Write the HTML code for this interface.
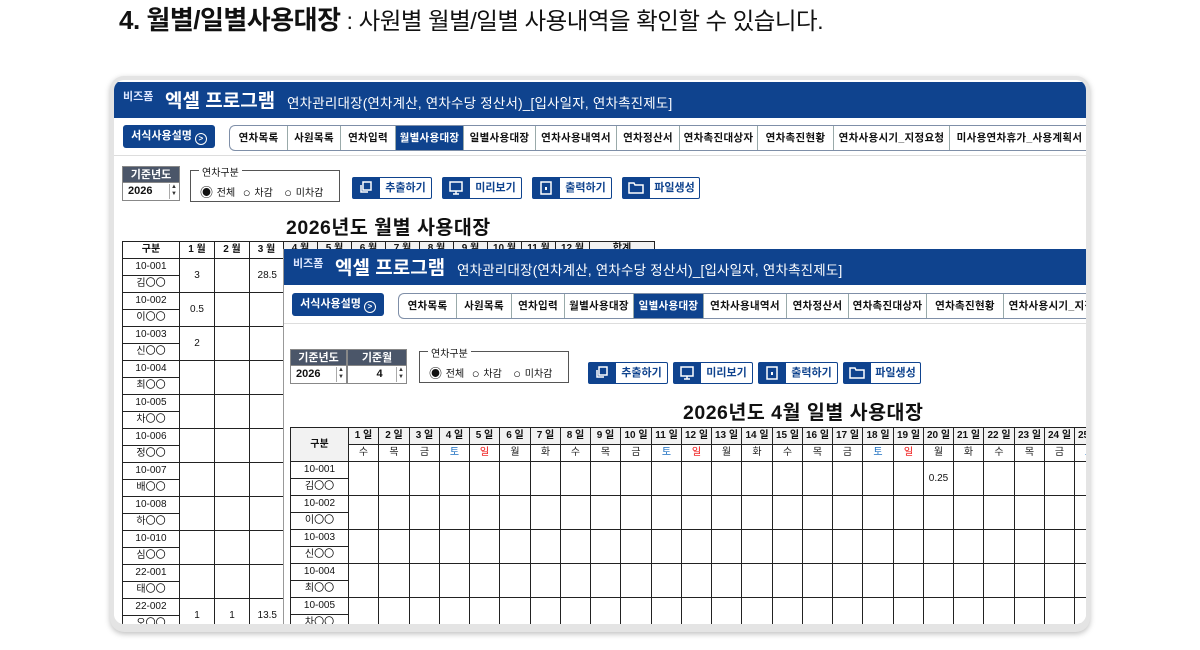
<!DOCTYPE html>
<html><head><meta charset="utf-8">
<style>
*{box-sizing:border-box;margin:0;padding:0}
body{width:1200px;height:650px;background:#fff;position:relative;overflow:hidden;font-family:"Liberation Sans","Noto Sans CJK KR",sans-serif;color:#111}
.a{position:absolute}
.card{left:110px;top:76px;width:980px;height:556px;border-radius:14px;background:#e4e4e4;box-shadow:0 2px 6px rgba(0,0,0,.25)}
.inner{left:114px;top:80px;width:972px;height:544px;border-radius:10px;background:#fff;overflow:hidden}
.win{position:absolute;background:#fff;overflow:hidden}
.hdr{position:absolute;left:0;top:0;right:0;height:36px;background:#0f438e;color:#fff}
.biz{position:absolute;left:9px;top:6px;font-size:11px;font-weight:bold;color:#dfe8ff}
.big{position:absolute;left:51px;top:4px;font-size:19px;font-weight:bold}
.sub{position:absolute;left:173px;top:10px;font-size:13.5px;letter-spacing:0.2px}
.help{position:absolute;background:#0f438e;color:#fff;font-size:11px;font-weight:bold;border-radius:3px;text-align:center;line-height:23px}
.tabs{position:absolute;height:26px;border:1px solid #7f8fa8;border-right:none;border-radius:6px 0 0 6px;display:flex;overflow:hidden;background:#fff}
.tabs div{font-size:10.5px;font-weight:bold;text-align:center;line-height:24px;border-right:1px solid #9aa;white-space:nowrap;overflow:hidden;letter-spacing:0.3px}
.tabs .on{background:#0f438e;color:#fff}
.lbl{position:absolute;background:#4b5669;color:#fff;font-size:11px;font-weight:bold;text-align:center;line-height:16px;border:1px solid #888}
.val{position:absolute;background:#fff;font-size:11px;font-weight:bold;line-height:17px;border:1px solid #888;padding-left:5px}
.spin{position:absolute;right:1px;top:1px;width:9px;height:15px;border-left:1px solid #aaa;font-size:6px;line-height:7px;text-align:center;color:#333}
.grp{position:absolute;border:1px solid #555;font-size:10px}
.grp .t{position:absolute;left:8px;top:-7px;background:#fff;padding:0 3px}
.grp .r{position:absolute;left:9px;top:11px;white-space:nowrap;word-spacing:1px}
.grp .r span{font-size:13px;vertical-align:-1px}
.btn{position:absolute;height:22px;border:1px solid #0f438e;border-radius:2px;background:#fff;display:flex;font-size:11px;font-weight:bold;color:#0f438e}
.btn .ic{width:27px;background:#0f438e;position:relative}
.btn .tx{flex:1;text-align:center;line-height:20px}
.ttl{position:absolute;font-size:19.5px;font-weight:bold;white-space:nowrap;letter-spacing:0.5px}
.c{position:absolute;border:1px solid #222;font-size:10px;text-align:center;background:#fff;white-space:nowrap}
.g{background:#f2f2f2;font-weight:bold}
</style></head><body>
<div class="a" style="left:119px;top:0px;font-size:26px;white-space:nowrap;letter-spacing:-0.5px"><b>4. 월별/일별사용대장</b><span style="font-size:23.5px"> : 사원별 월별/일별 사용내역을 확인할 수 있습니다.</span></div>
<div class="a card"></div>
<div class="a inner">
 <div class="win" id="w1" style="left:0;top:2px;width:972px;height:542px"></div>
 <div class="win" id="w2" style="left:170px;top:169px;width:802px;height:375px;box-shadow:-1px 0 0 #999"></div>
</div>
<script>
function el(p,cls,st,html){var d=document.createElement('div');if(cls)d.className=cls;d.style.cssText=st;if(html!=null)d.innerHTML=html;p.appendChild(d);return d;}
var icons=[
'<svg width="27" height="20" viewBox="0 0 27 20"><rect x="10" y="4" width="8" height="8" fill="none" stroke="#fff" stroke-width="1.5"/><path d="M8 7v7h7" fill="none" stroke="#fff" stroke-width="1.5"/></svg>',
'<svg width="27" height="20" viewBox="0 0 27 20"><rect x="7" y="4" width="12" height="9" fill="none" stroke="#fff" stroke-width="1.5"/><path d="M13 13v3M10 16h6" stroke="#fff" stroke-width="1.5"/></svg>',
'<svg width="27" height="20" viewBox="0 0 27 20"><rect x="8" y="4" width="10" height="12" fill="none" stroke="#fff" stroke-width="1.5"/><rect x="12" y="9" width="2" height="3" fill="#fff"/></svg>',
'<svg width="27" height="20" viewBox="0 0 27 20"><path d="M6 5h5l1 2h8v8H6z" fill="none" stroke="#fff" stroke-width="1.5"/></svg>'];
function win(w,o){
 var h=el(w,'hdr','');
 el(h,'biz','','비즈폼');el(h,'big','','엑셀 프로그램');el(h,'sub','','연차관리대장(연차계산, 연차수당 정산서)_[입사일자, 연차촉진제도]');
 el(w,'help','left:'+o.hx+'px;top:'+o.hy+'px;width:92px;height:23px','서식사용설명 <span style="display:inline-block;width:12px;height:12px;border:1.5px solid #fff;border-radius:50%;font-size:8px;line-height:9px;vertical-align:-2px">&gt;</span>');
 var t=el(w,'tabs','left:'+o.tx+'px;top:'+o.hy+'px;width:'+(972-o.tx+10)+'px');
 o.tabs.forEach(function(a,i){el(t,i==o.on?'on':'','width:'+a[1]+'px;flex:none',a[0]);});
 el(w,'',' position:absolute;left:0;right:0;top:'+(o.hy+30)+'px;height:1px;background:#ddd');
 o.lbls.forEach(function(l){el(w,'lbl','left:'+l[0]+'px;top:'+o.ly+'px;width:'+l[1]+'px;height:17px',l[2]);
  var v=el(w,'val','left:'+l[0]+'px;top:'+(o.ly+16)+'px;width:'+l[1]+'px;height:19px;'+(l[4]?'text-align:center':''),l[3]);el(v,'spin','','▲<br>▼');});
 var g=el(w,'grp','left:'+o.gx+'px;top:'+o.gy+'px;width:150px;height:32px');
 el(g,'t','','연차구분');el(g,'r','','<span>◉</span> 전체 &nbsp;<span>○</span> 차감 &nbsp; <span>○</span> 미차감');
 ['추출하기','미리보기','출력하기','파일생성'].forEach(function(s,i){var b=el(w,'btn','left:'+o.bx[i]+'px;top:'+o.by+'px;width:'+(i==3?78:80)+'px');el(b,'ic','',icons[i]);el(b,'tx','',s);});
 el(w,'ttl','left:'+o.ttx+'px;top:'+o.tty+'px',o.ttl);
}
var T1=[['연차목록',58],['사원목록',53],['연차입력',55],['월별사용대장',68],['일별사용대장',72],['연차사용내역서',81],['연차정산서',63],['연차촉진대상자',78],['연차촉진현황',76],['연차사용시기_지정요청',116],['미사용연차휴가_사용계획서',140]];
var T2=[['연차목록',58],['사원목록',55],['연차입력',53],['월별사용대장',69],['일별사용대장',70],['연차사용내역서',83],['연차정산서',62],['연차촉진대상자',78],['연차촉진현황',77],['연차사용시기_지정요청',116]];
var w1=document.getElementById('w1'),w2=document.getElementById('w2');
win(w1,{hx:9,hy:43,tx:115,tabs:T1,on:3,ly:84,lbls:[[8,58,'기준년도','2026']],gx:76,gy:88,bx:[238,328,418,508],by:95,ttx:172,tty:129,ttl:'2026년도 월별 사용대장'});
win(w2,{hx:8,hy:44,tx:114,tabs:T2,on:4,ly:100,lbls:[[6,57,'기준년도','2026'],[63,60,'기준월','4',1]],gx:135,gy:102,bx:[304,389,474,559],by:113,ttx:399,tty:147,ttl:'2026년도 4월 일별 사용대장'});
var L=[8,65,100,135,169],R=159;
var hd=['구분','1 월','2 월','3 월'];
for(var i=0;i<4;i++)el(w1,'c g','left:'+L[i]+'px;top:'+R+'px;width:'+(L[i+1]-L[i]+1)+'px;height:18px;line-height:16px;background:#fff',hd[i]);
var mh=['4 월','5 월','6 월','7 월','8 월','9 월','10 월','11 월','12 월','합계'];
for(var i=0;i<10;i++)el(w1,'c g','left:'+(169+i*34)+'px;top:'+R+'px;width:'+(i==9?66:35)+'px;height:18px;line-height:14px',mh[i]);
var ids=['10-001','10-002','10-003','10-004','10-005','10-006','10-007','10-008','10-010','22-001','22-002'];
var nm=['김〇〇','이〇〇','신〇〇','최〇〇','차〇〇','정〇〇','배〇〇','하〇〇','심〇〇','태〇〇','오〇〇'];
var vals={0:['3','','28.5'],1:['0.5','',''],2:['2','',''],10:['1','1','13.5']};
ids.forEach(function(id,k){var y=R+17+k*34;
 el(w1,'c','left:8px;top:'+y+'px;width:58px;height:18px;line-height:16px',id);
 el(w1,'c','left:8px;top:'+(y+17)+'px;width:58px;height:18px;line-height:16px',nm[k]);
 for(var i=1;i<4;i++)el(w1,'c','left:'+L[i]+'px;top:'+y+'px;width:'+(L[i+1]-L[i]+1)+'px;height:35px;line-height:33px;'+(i==3?'text-align:right;padding-right:6px':''),(vals[k]||['','',''])[i-1]);
});
var X1=64,DW=30.25,R2=178;
el(w2,'c g','left:6px;top:'+R2+'px;width:59px;height:35px;line-height:33px','구분');
var wd=['수','목','금','토','일','월','화'];
for(var d=0;d<25;d++){var x=Math.round(X1+d*DW),x2=Math.round(X1+(d+1)*DW),wd_=wd[d%7];
 el(w2,'c g','left:'+x+'px;top:'+R2+'px;width:'+(x2-x+1)+'px;height:18px;line-height:16px;overflow:hidden',(d+1)+' 일');
 el(w2,'c','left:'+x+'px;top:'+(R2+17)+'px;width:'+(x2-x+1)+'px;height:18px;line-height:16px;color:'+(wd_=='토'?'#1c6fc0':wd_=='일'?'#e00':'#222'),wd_);
}
ids.slice(0,6).forEach(function(id,k){var y=R2+34+k*34;
 el(w2,'c','left:6px;top:'+y+'px;width:59px;height:18px;line-height:16px',id);
 el(w2,'c','left:6px;top:'+(y+17)+'px;width:59px;height:18px;line-height:16px',nm[k]);
 for(var d=0;d<25;d++){var x=Math.round(X1+d*DW),x2=Math.round(X1+(d+1)*DW);
  el(w2,'c','left:'+x+'px;top:'+y+'px;width:'+(x2-x+1)+'px;height:35px;line-height:33px',(k==0&&d==19)?'0.25':'');}
});
</script>
</body></html>
